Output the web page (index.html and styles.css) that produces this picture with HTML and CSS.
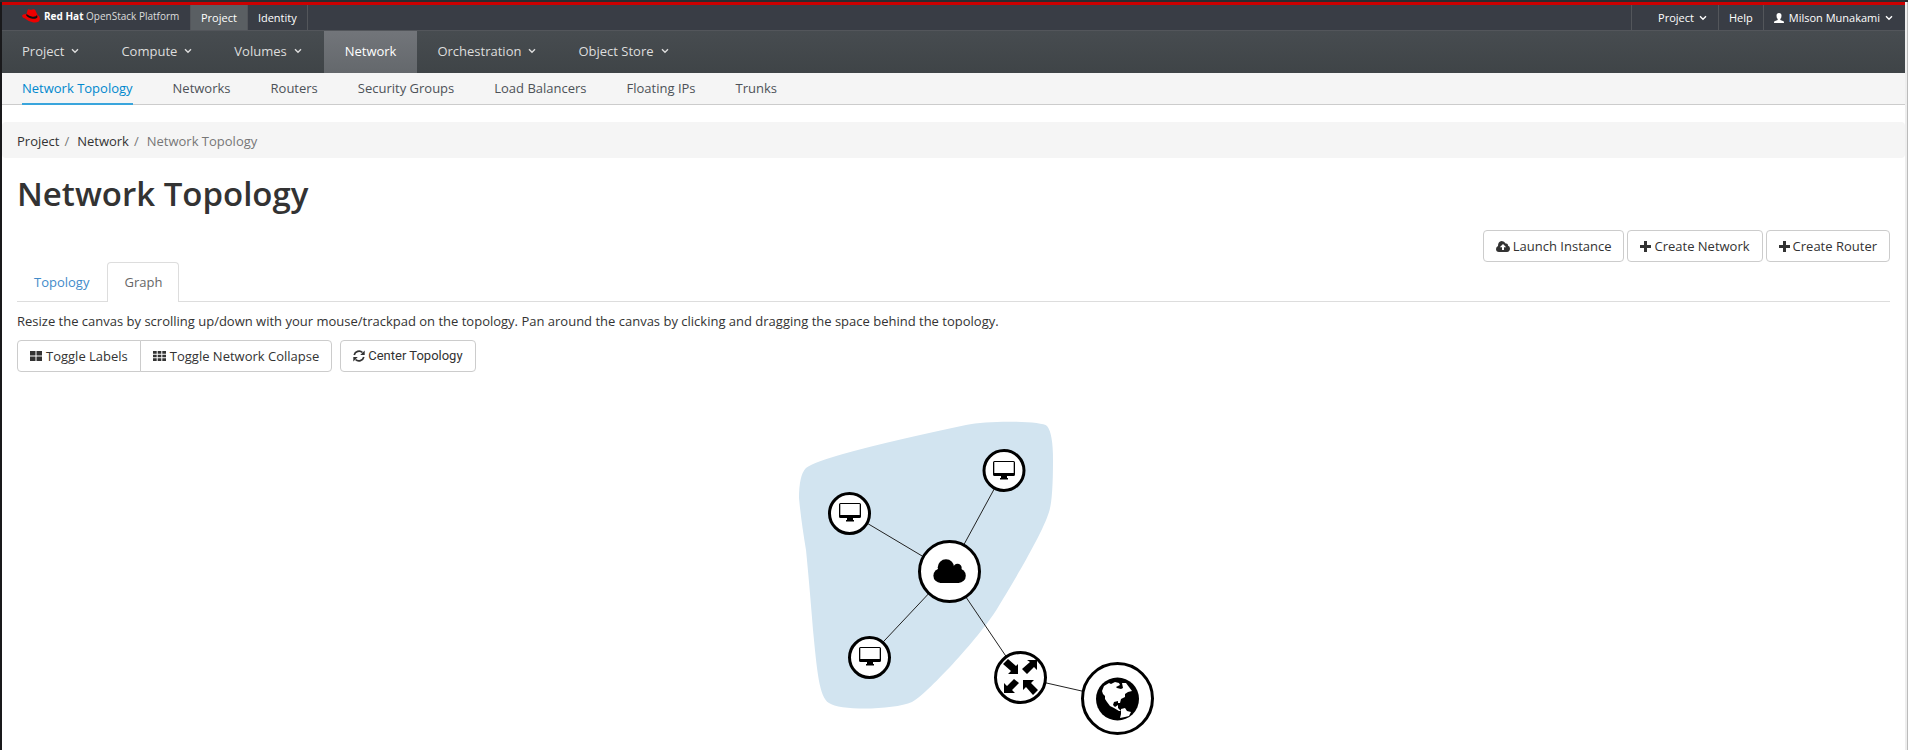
FILE: index.html
```html
<!DOCTYPE html>
<html lang="en">
<head>
<meta charset="utf-8">
<title>Network Topology - Red Hat OpenStack Platform</title>
<link rel="stylesheet" href="styles.css">
</head>
<body>
<svg class="sprite" aria-hidden="true">
  <symbol id="chev" viewBox="0 0 8 6"><path d="M1 1.200l3 3 3-3" fill="none" stroke="currentColor" stroke-width="1.400"/></symbol>
  <symbol id="plus" viewBox="0 0 11 11"><path d="M4 0h3v4h4v3H7v4H4V7H0V4h4z"/></symbol>
  <symbol id="screen" viewBox="0 0 22 19"><path fill-rule="evenodd" d="M1.500 0h19q1.500 0 1.500 1.500v12q0 1.500-1.500 1.500H14v2h1v1.500H7V17h1v-2H1.500Q0 15 0 13.500v-12Q0 0 1.500 0zM1.300 1v11h19.400V1z"/></symbol>
</svg>
<div class="page">
  <header>
    <div class="topbar">
      <a class="brand" href="#">
        <svg class="hat" viewBox="0 0 18 14"><path fill="#e00" d="M4.500 5L5.500 1.300Q6 0 7.300.4l1 .3Q9 1 10 .6l1.500-.3Q12.500.2 13.200 1L15.500 6q2.500 1.300 2.400 3.700Q17.500 14 11.500 13.500 7 13 3 9.500.200 8.800.100 7 .100 5.200 4.500 5z"/><path d="M4.500 5L4.100 6.300Q6 9.300 10.500 9.700q4.500.3 5-1.700L15 6q-.6 2-4.500 1.700Q7 7.300 4.500 5z" fill="#111"/></svg>
        <span><b>Red Hat</b> OpenStack Platform</span>
      </a>
      <nav class="contexts"><a class="on" href="#">Project</a><a href="#">Identity</a></nav>
      <nav class="tools">
        <a class="picker" href="#">Project <svg class="chev"><use href="#chev"/></svg></a>
        <a href="#">Help</a>
        <a class="user" href="#"><svg class="person" viewBox="0 0 10 10"><path d="M5 0q2.500 0 2.500 2.800Q7.500 5 6.300 6v1L9.500 8.300q.5.200.5 1.700H0Q0 8.500.500 8.300L3.700 7V6Q2.500 5 2.500 2.800 2.500 0 5 0z"/></svg>Milson Munakami <svg class="chev"><use href="#chev"/></svg></a>
      </nav>
    </div>
    <nav class="mainnav">
      <a href="#">Project <svg class="chev"><use href="#chev"/></svg></a>
      <a href="#">Compute <svg class="chev"><use href="#chev"/></svg></a>
      <a href="#">Volumes <svg class="chev"><use href="#chev"/></svg></a>
      <a class="on" href="#">Network</a>
      <a href="#">Orchestration <svg class="chev"><use href="#chev"/></svg></a>
      <a href="#">Object Store <svg class="chev"><use href="#chev"/></svg></a>
    </nav>
    <nav class="subnav">
      <a class="on" href="#">Network Topology</a>
      <a href="#">Networks</a>
      <a href="#">Routers</a>
      <a href="#">Security Groups</a>
      <a href="#">Load Balancers</a>
      <a href="#">Floating IPs</a>
      <a href="#">Trunks</a>
    </nav>
  </header>
  <nav class="crumbs"><a href="#">Project</a><i>/</i><a href="#">Network</a><i>/</i><span>Network Topology</span></nav>
  <main>
    <h1>Network Topology</h1>
    <div class="actions">
      <button type="button"><svg class="up" viewBox="0 0 14 11"><path fill-rule="evenodd" d="M3 11Q0 10.800 0 7.900 0 5.900 2 5 1.900.300 5.700 0q2.800 0 3.900 2.500Q12 2 12.100 4.800 14 5.500 14 7.800 13.800 10.800 11 11zM7 3L3.800 6.300H6V9h2V6.300h2.200z"/></svg>Launch Instance</button>
      <button type="button"><svg class="plus"><use href="#plus"/></svg>Create Network</button>
      <button type="button"><svg class="plus"><use href="#plus"/></svg>Create Router</button>
    </div>
    <nav class="tabs"><a href="#">Topology</a><a class="on" href="#">Graph</a></nav>
    <p>Resize the canvas by scrolling up/down with your mouse/trackpad on the topology. Pan around the canvas by clicking and dragging the space behind the topology.</p>
    <div class="toggles">
      <div class="group">
        <button type="button"><svg class="large" viewBox="0 0 12 10"><path d="M0 0h5.500v4.500H0zM6.500 0H12v4.500H6.500zM0 5.500h5.500V10H0zM6.500 5.500H12V10H6.500z"/></svg>Toggle Labels</button>
        <button type="button"><svg class="grid" viewBox="0 0 13 10"><path d="M0 0h3.700v2.700H0zM4.700 0h3.600v2.700H4.700zM9.300 0H13v2.700H9.300zM0 3.700h3.700v2.600H0zM4.700 3.700h3.600v2.600H4.700zM9.300 3.700H13v2.600H9.300zM0 7.300h3.700V10H0zM4.700 7.300h3.600V10H4.700zM9.300 7.300H13V10H9.300z"/></svg>Toggle Network Collapse</button>
      </div>
      <button class="center" type="button"><svg class="sync" viewBox="0 0 12 12"><path d="M1.200 5A5 5 0 0 1 9.500 2.500M10.800 7A5 5 0 0 1 2.500 9.500" fill="none" stroke="currentColor" stroke-width="1.700"/><path d="M11.700.500V5H7.200zM.300 11.500V7h4.500z"/></svg>Center Topology</button>
    </div>
    <svg class="graph" viewBox="744 400 420 350" role="img" aria-label="Network graph">
      <path class="hull" d="M806 468Q820 456 966 425C990 420 1042 421 1047 426Q1053 433 1053 460Q1053 500 1049 512C1042 535 1008 591 997 609C979 638 925 696 912 702C894 710 840 711 829 703C819 697 817 670 813 630Q809 580 806 550Q801 520 799 498Q799 475 806 468Z"/>
      <path class="links" d="M949 572L1004 471M949 572L850 513M949 572L869 657M949 572L1020 677L1117 699"/>
      <g class="ring"><circle cx="1004" cy="470.500" r="20"/><circle cx="849.500" cy="513.500" r="20"/><circle cx="869.500" cy="657.500" r="20"/><circle cx="949.500" cy="571.500" r="30"/><circle cx="1020.500" cy="677.500" r="25"/><circle cx="1117.500" cy="698.500" r="35"/></g>
      <use href="#screen" x="993" y="461" width="22" height="19"/>
      <use href="#screen" x="839" y="503" width="22" height="19"/>
      <use href="#screen" x="859" y="647" width="22" height="19"/>
      <g><circle cx="946" cy="567.500" r="8.300"/><circle cx="957.500" cy="568" r="4.200"/><circle cx="940.700" cy="575.700" r="7.300"/><circle cx="958.500" cy="575.700" r="7.300"/><path d="M940 568h19v15h-19z"/></g>
      <path d="M1018 674h-10l3-3-8-7 5-5 8 7 2-2z"/>
      <path d="M1037 660v10l-3-3-7 7-5-5 8-7-3-2zM1023 680h11l-3 3 7 7-5 5-7-8-3 3zM1004 693v-10l3 3 7-7 5 4-7 7 3 3z"/>
      <circle cx="1117.500" cy="699" r="21.500"/>
      <path fill="#fff" d="M1102 691L1104 686 1109 683 1111 684 1115 682 1119 683 1120 685 1116 687 1117 688 1121 689 1123 688 1122 683 1126 683 1129 687 1132 691 1128 692 1125 694 1125 697 1121 699 1120 703 1118 703 1118 701 1114 702 1113 705 1115 707 1118 705 1118 708 1121 711 1119 711 1114 708 1110 706 1107 702 1105 699 1105 696 1103 694ZM1121 709L1125 708 1127 711 1131 712 1129 716 1125 717 1120 718 1121 714Z"/>
    </svg>
  </main>
</div>
</body>
</html>
```
FILE: styles.css
```css
* { box-sizing: border-box; }
body { margin: 0; background: #fff; color: #333; font: 13px/20px "Open Sans", sans-serif; border-top: 2px solid #2b2c2f; }
a { color: inherit; text-decoration: none; }
svg { flex: none; fill: currentColor; }
.sprite { display: none; }
.page { border-left: 2px solid #19191b; border-right: 1px solid #bbb; padding-right: 2px; background: linear-gradient(to left, #eee 2px, #fff 2px); min-height: calc(100vh - 2px); }
header { border-top: 3px solid #c00; }
.topbar { display: flex; height: 25px; background: #393d45; color: #fff; font-size: 11px; line-height: 26px; }
.brand { display: flex; gap: 4px; padding-left: 20px; width: 188px; font-size: 10px; line-height: 22px; color: #ddd; white-space: nowrap; }
.brand b { color: #fff; }
.hat { width: 18px; height: 14px; margin-top: 4px; }
.contexts, .tools { display: flex; }
.contexts a { padding: 0 10px; border-right: 1px solid #53565b; }
.contexts .on { background: #5a5f63; border-left: 1px solid #53565b; }
.tools { margin-left: auto; }
.tools a { display: flex; align-items: center; gap: 5px; padding: 0 10px; border-left: 1px solid #53565b; }
.tools .picker { padding: 0 11px 0 26px; }
.tools .user { padding-right: 12px; }
.person { width: 10px; height: 10px; }
.chev { width: 8px; height: 6px; }
.mainnav { display: flex; height: 43px; border-top: 1px solid #53565b; background: linear-gradient(#474c50, #3f4447); color: #ddd; line-height: 40px; }
.mainnav a { display: flex; align-items: center; gap: 7px; padding: 0 22px 2px 20px; }
.mainnav .on { background: linear-gradient(#72757a, #64686c); color: #fff; padding: 0 21px 2px; }
.subnav { display: flex; gap: 40px; height: 32px; padding-left: 20px; background: #f5f5f5; border-bottom: 1px solid #ccc; color: #4d5258; line-height: 31px; }
.subnav .on { height: 32px; border-bottom: 2px solid #39a5dc; color: #0088ce; }
.crumbs { display: flex; margin-top: 17px; padding: 2px 15px 0; background: #f5f5f5; border-radius: 4px; line-height: 34px; }
.crumbs i { font-style: normal; color: #777; padding: 0 8px 0 5px; }
.crumbs span { color: #777; }
main { padding: 17px 15px 0; }
h1 { margin: 0; font-size: 33px; line-height: 38px; font-weight: 600; }
.actions { display: flex; justify-content: flex-end; gap: 3px; margin-top: 17px; }
button { display: flex; align-items: center; gap: 3px; height: 32px; padding: 0 12px; border: 1px solid #ccc; border-radius: 4px; background: #fff; color: #333; font: inherit; }
.up { width: 14px; height: 11px; }
.plus { width: 11px; height: 11px; }
.tabs { display: flex; gap: 1px; border-bottom: 1px solid #ddd; line-height: 38px; color: #428bca; }
.tabs a { padding: 0 16px; border: 1px solid transparent; border-bottom: 0; }
.tabs .on { margin-bottom: -1px; background: #fff; border-color: #ddd; border-radius: 4px 4px 0 0; color: #666; }
p { margin: 9px 0; }
.toggles { display: flex; gap: 8px; }
.group { display: flex; }
.group button { gap: 4px; }
.group button:first-child { border-radius: 4px 0 0 4px; }
.group button:last-child { border-radius: 0 4px 4px 0; margin-left: -1px; }
.large { width: 12px; height: 10px; }
.grid { width: 13px; height: 10px; }
.sync { width: 12px; height: 12px; }
.center { font-family: Roboto, sans-serif; }
.graph { display: block; width: 420px; height: 350px; margin: 28px auto 0; fill: #000; }
.hull { fill: #d2e4f0; }
.links { fill: none; stroke: #222; }
.ring { fill: #fff; stroke: #000; stroke-width: 3; }
```
